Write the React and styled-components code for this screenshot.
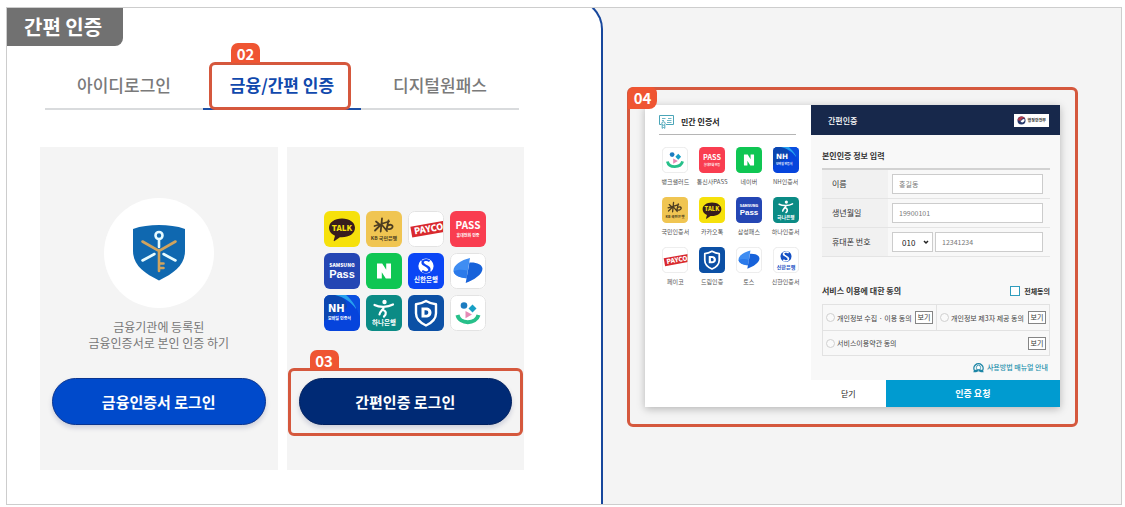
import React from "react";
import styled, { createGlobalStyle, css } from "styled-components";

const FONT = '"Noto Sans CJK KR", "Noto Sans", sans-serif';
const RED = "#d5583d";

const GlobalStyle = createGlobalStyle`
  *, *::before, *::after { box-sizing: border-box; }
  body { margin: 0; background: #fff; font-family: ${FONT}; color: #333; }
  button, input, select { font-family: inherit; margin: 0; }
  h1, h2, h3, p, ul { margin: 0; padding: 0; }
`;

const Page = styled.div`
  padding: 7px 3px 2px 6px;
`;

const Frame = styled.main`
  display: grid;
  grid-template-columns: 596fr 518fr;
  border: 1px solid #cdcdcd;
  background: #f4f4f4;
  overflow: hidden;
`;

/* ---------- login side ---------- */

const LoginPanel = styled.section`
  margin-top: -9px;
  padding: 7px 77px 34px 0;
  background: #fff;
  border: 2px solid #17479c;
  border-width: 2px 2px 0 0;
  border-top-right-radius: 30px;
`;

const PageTitle = styled.h1`
  width: fit-content;
  padding: 0 21px 0 17px;
  background: #717171;
  border-bottom-right-radius: 8px;
  color: #fff;
  font-size: 20px;
  font-weight: 700;
  line-height: 38px;
`;

const Tabs = styled.div`
  display: grid;
  grid-template-columns: repeat(3, 1fr);
  margin: 16px 5px 0 38px;
`;

const Tab = styled.button`
  position: relative;
  height: 48px;
  padding: 0;
  background: none;
  border: 0;
  border-bottom: 2px solid ${(p) => (p.$active ? "#1c4fa5" : "#d9dbdd")};
  color: ${(p) => (p.$active ? "#1149ad" : "#7a7a7a")};
  font-size: 17px;
  font-weight: ${(p) => (p.$active ? 700 : 500)};
  line-height: 24px;
`;

const outline = css`
  border: 3px solid ${RED};
  border-radius: 6px;
`;

const TabOutline = styled.span`
  position: absolute;
  inset: 0 10px -2px 6px;
  ${outline}
`;

const Badge = styled.span`
  position: absolute;
  top: ${(p) => p.$top}px;
  left: ${(p) => p.$left}px;
  width: 29px;
  height: ${(p) => (p.$corner ? 22 : 20)}px;
  background: #ef5532;
  border-radius: ${(p) => (p.$corner ? "6px 6px 8px 0" : "7px 7px 0 0")};
  color: #fff;
  font-size: 15px;
  font-weight: 700;
  line-height: 21px;
  text-align: center;
`;

const Cards = styled.div`
  display: grid;
  grid-template-columns: 1fr 1fr;
  gap: 9px;
  margin: 37px 0 0 33px;
`;

const Card = styled.article`
  display: flex;
  flex-direction: column;
  align-items: center;
  min-height: 323px;
  padding: ${(p) => p.$top}px 12px 45px;
  background: #f4f4f4;
`;

const ShieldDisc = styled.div`
  display: grid;
  place-items: center;
  width: 110px;
  height: 110px;
  margin-bottom: 11px;
  background: #fff;
  border-radius: 50%;
`;

const CardText = styled.p`
  color: #777;
  font-size: 12px;
  line-height: 16px;
  text-align: center;
`;

const ActionSlot = styled.div`
  position: relative;
  width: 100%;
  margin-top: auto;
`;

const ActionOutline = styled.span`
  position: absolute;
  inset: -10px -11px -11px;
  pointer-events: none;
  ${outline}
`;

const LoginButton = styled.button`
  display: block;
  width: 100%;
  height: 47px;
  background: ${(p) => (p.$dark ? "#002a75" : "#004acb")};
  border: 1px solid ${(p) => (p.$dark ? "#00205f" : "#0a3590")};
  border-radius: 24px;
  box-shadow: 0 3px 5px rgba(0, 20, 90, 0.16);
  color: #fff;
  font-size: 15px;
  font-weight: 700;
`;

const LogoGrid = styled.div`
  display: grid;
  grid-template-columns: repeat(4, 36px);
  gap: 6px;
`;

/* ---------- certificate dialog ---------- */

const PreviewPanel = styled.section`
  padding: 79px 43px 0 24px;
`;

const PreviewOutline = styled.div`
  position: relative;
  padding: 15px 15px 17px;
  ${outline}
`;

const Dialog = styled.div`
  display: grid;
  grid-template-columns: 2fr 3fr;
  background: #fff;
  box-shadow: 0 2px 8px rgba(0, 0, 0, 0.26);
`;

const Providers = styled.section`
  padding: 10px 7px 0 12px;
`;

const ProvidersTitle = styled.h2`
  display: flex;
  align-items: center;
  gap: 7px;
  margin: 0 8px 12px 2px;
  padding-bottom: 5px;
  border-bottom: 1px solid #b5b5b5;
  color: #222;
  font-size: 8px;
  font-weight: 700;
  line-height: 14px;
`;

const ProviderGrid = styled.div`
  display: grid;
  grid-template-columns: repeat(4, 1fr);
  row-gap: 10px;
`;

const Provider = styled.button`
  display: flex;
  flex-direction: column;
  align-items: center;
  gap: 3px;
  padding: 0;
  background: none;
  border: 0;
  color: #555;
  font-size: 6px;
  line-height: 11px;
  white-space: nowrap;
`;

const AuthForm = styled.form`
  display: flex;
  flex-direction: column;
  min-width: 0;
  background: #f8f8f8;
`;

const AuthHeader = styled.header`
  display: flex;
  align-items: center;
  justify-content: space-between;
  height: 30px;
  padding: 0 11px 0 17px;
  background: #17284b;
  color: #fff;
`;

const AuthTitle = styled.h2`
  font-size: 8px;
  font-weight: 500;
`;

const Ministry = styled.span`
  display: flex;
  align-items: center;
  gap: 2px;
  height: 13px;
  padding: 0 3px;
  background: #fff;
  color: #333;
  font-size: 4px;
  font-weight: 700;
`;

const AuthBody = styled.div`
  padding: 15px 10px 7px 11px;
`;

const SectionTitle = styled.h3`
  color: #333;
  font-size: 8px;
  font-weight: 700;
  line-height: 12px;
`;

const Fields = styled.div`
  margin-top: 6px;
  border-top: 2px solid #d2d2d2;
`;

const Field = styled.div`
  display: grid;
  grid-template-columns: 66px 1fr;
  height: 29px;
  border-bottom: 1px solid #e4e4e4;
`;

const FieldLabel = styled.label`
  padding-left: 10px;
  background: #f1f1f1;
  color: #333;
  font-size: 8px;
  line-height: 28px;
`;

const FieldControls = styled.div`
  display: flex;
  align-items: center;
  gap: 2px;
  padding: 0 7px 0 4px;
`;

const controlBox = css`
  height: 20px;
  background: #fff;
  border: 1px solid #ccc;
  border-radius: 0;
`;

const TextInput = styled.input`
  flex: 1;
  min-width: 0;
  padding: 0 6px;
  color: #777;
  font-size: 7px;
  ${controlBox}
`;

const SelectBox = styled.span`
  position: relative;
  width: 41px;
  height: 20px;
`;

const Select = styled.select`
  display: block;
  width: 100%;
  padding: 0 0 0 9px;
  appearance: none;
  color: #222;
  font-size: 8px;
  ${controlBox}
`;

const Chevron = styled.svg`
  position: absolute;
  right: 4px;
  top: 8px;
  pointer-events: none;
`;

const ConsentHead = styled.div`
  display: flex;
  justify-content: space-between;
  margin-top: 28px;
`;

const AgreeAll = styled.label`
  display: flex;
  align-items: center;
  gap: 4px;
  color: #333;
  font-size: 7px;
  font-weight: 700;
  line-height: 12px;
`;

const CheckBox = styled.input`
  width: 10px;
  height: 10px;
  appearance: none;
  background: #fff;
  border: 1px solid #2f9cbd;
`;

const ConsentGrid = styled.div`
  display: grid;
  grid-template-columns: 1fr 1fr;
  margin-top: 7px;
  border: 1px solid #e2e2e2;
`;

const Consent = styled.div`
  display: flex;
  align-items: center;
  justify-content: space-between;
  height: 25px;
  padding: 0 3px;
  ${(p) => p.$divided && "border-left: 1px solid #e2e2e2;"}
  ${(p) => p.$wide && "grid-column: 1 / -1; border-top: 1px solid #e2e2e2;"}
`;

const ConsentLabel = styled.label`
  display: flex;
  align-items: center;
  gap: 2px;
  color: #444;
  font-size: 7px;
  line-height: 12px;
  white-space: nowrap;
`;

const Radio = styled.input`
  flex: none;
  width: 9px;
  height: 9px;
  appearance: none;
  background: #fafafa;
  border: 1px solid #d0d0d0;
  border-radius: 50%;
`;

const ViewButton = styled.button`
  width: 18px;
  height: 13px;
  padding: 0;
  background: #fff;
  border: 1px solid #858585;
  color: #333;
  font-size: 7px;
  line-height: 11px;
  white-space: nowrap;
`;

const ManualLink = styled.a`
  display: flex;
  align-items: center;
  gap: 3px;
  width: fit-content;
  margin: 5px 2px 0 auto;
  color: #2390ad;
  font-size: 7px;
  font-weight: 500;
  line-height: 12px;
  text-decoration: none;
`;

const AuthFooter = styled.footer`
  display: grid;
  grid-template-columns: 3fr 7fr;
  height: 27px;
`;

const FooterButton = styled.button`
  padding: 0;
  background: ${(p) => (p.$primary ? "#009bd0" : "#fff")};
  border: 0;
  color: ${(p) => (p.$primary ? "#fff" : "#222")};
  font-size: ${(p) => (p.$primary ? 9 : 8)}px;
  font-weight: ${(p) => (p.$primary ? 700 : 400)};
`;

/* ---------- drawings ---------- */

const LogoText = ({ y, size, fill = "#fff", weight = 700, x = 18, family = FONT, anchor = "middle", children }) => (
  <text x={x} y={y} fontSize={size} fill={fill} fontWeight={weight} textAnchor={anchor} fontFamily={family}>
    {children}
  </text>
);

const ShinhanMark = ({ disc, stroke }) => (
  <g>
    <circle cx="18" cy="13" r="7.6" fill={disc} />
    <path d="M21.6 8.2c-2.6-2.3-7.4-1.2-7.2 1.7.2 3 7.3 2.8 7.2 6.4-.1 3.2-4.8 3.8-7.4 1.5" fill="none" stroke={stroke} strokeWidth="2" />
    <path d="M13.4 7.2l9.2 11.6" stroke={stroke} strokeWidth="1" />
  </g>
);

const LOGOS = {
  talk: {
    bg: "#f6e10b",
    art: (
      <>
        <path d="M18 7.5c-7.6 0-13 4-13 9.300 0 3.600 2.400 6.500 6 8l-1.300 4.800c-.1.500.4.800.8.500l5.400-3.900c8.300.7 15.100-3.200 15.100-9.400 0-5.300-5.400-9.300-13-9.300z" fill="#371d1e" />
        <LogoText y="19.800" size="8" fill="#f6e10b" weight={900}>TALK</LogoText>
      </>
    ),
  },
  kb: {
    bg: "#f0c552",
    art: (
      <>
        <path d="M10 10.500l3 2.500M16 7.500l-1.300 13M8.500 15l14.500-4.500M14 14.500L9 19.500M16 14l5 6M22.500 9.500l-1.800 8.500M21 15.500c2.500-3 6.500-1.700 5.400.8-.9 2-4 2.300-6 1.200" fill="none" stroke="#4d3d21" strokeWidth="1.800" strokeLinecap="round" />
        <LogoText y="28.800" size="5" fill="#4d3d21">KB 국민은행</LogoText>
      </>
    ),
  },
  payco: {
    bg: "#fff",
    edge: true,
    art: (
      <g transform="rotate(-10 18 18)">
        <rect x="3" y="13" width="40" height="11" fill="#d9292e" />
        <LogoText x="6" y="21.500" size="9" weight={900} anchor="start">PAYCO</LogoText>
      </g>
    ),
  },
  pass: {
    bg: "#f93d50",
    art: (
      <>
        <LogoText y="18" size="10">PASS</LogoText>
        <LogoText y="26" size="4">휴대전화 인증</LogoText>
      </>
    ),
  },
  samsung: {
    bg: "#2446b4",
    art: (
      <>
        <LogoText y="13.500" size="5" weight={900}>SAMSUNG</LogoText>
        <LogoText y="25" size="11" family='"Liberation Sans", sans-serif'>Pass</LogoText>
      </>
    ),
  },
  naver: {
    bg: "#0fc653",
    art: <path d="M11 10.500h5.200l4 6.300v-6.300H25v15h-5.200l-4-6.300v6.300H11z" fill="#fff" />,
  },
  shinhan: {
    bg: "#0b46f5",
    art: (
      <>
        <ShinhanMark disc="#fff" stroke="#0b46f5" />
        <LogoText y="29" size="6.500">신한은행</LogoText>
      </>
    ),
  },
  shinhanLight: {
    bg: "#fff",
    edge: true,
    art: (
      <>
        <ShinhanMark disc="#1550c4" stroke="#fff" />
        <LogoText y="30" size="7" fill="#1550c4">신한은행</LogoText>
      </>
    ),
  },
  toss: {
    bg: "#fff",
    edge: true,
    art: (
      <>
        <path d="M20 5C11 7 3.500 12 3.500 17.500c0 4.500 6 7.300 13 7.800z" fill="#3f8df2" />
        <path d="M3.600 18.500c3-2 8-2.500 13.800-1l-.9 7.800c-6.500-.5-12.200-2.800-12.900-6.800z" fill="#2b7aea" />
        <path d="M19.400 9.500c7-.5 13.100 2 13.100 6.300 0 5.700-8.500 11.200-16.800 14.200 1-6 2.300-12 3.700-20.500z" fill="#1762da" />
      </>
    ),
  },
  nh: {
    bg: "#0644dc",
    art: (
      <>
        <path d="M0 0h14c6 3 9 7 9 12C20 17 8 20 0 26z" fill="#0b46b0" />
        <path d="M11 0h15c4 4 6 9 6 14C27 7 20 2 11 0z" fill="#26a1ee" />
        <path d="M22 0h14v22c-3-9-7-16-14-22z" fill="#0a4fe0" />
        <LogoText x="4" y="16.500" size="10" anchor="start" family='"DejaVu Sans", sans-serif'>NH</LogoText>
        <LogoText x="4" y="25" size="4" anchor="start">모바일 인증서</LogoText>
      </>
    ),
  },
  hana: {
    bg: "#0b8b85",
    art: (
      <>
        <circle cx="18.500" cy="7" r="2.200" fill="#fff" />
        <path d="M8.500 10c5 2.500 13 2.500 18.500-.5M18 12c-1 3.500-4.500 4.500-4.500 7.500" fill="none" stroke="#fff" strokeWidth="2.200" strokeLinecap="round" />
        <path d="M16.500 15c4 .5 4.200 4.500 1.500 6.500" fill="none" stroke="#fff" strokeWidth="2.200" strokeLinecap="round" />
        <LogoText y="30" size="6.500">하나은행</LogoText>
      </>
    ),
  },
  dream: {
    bg: "#0c50a5",
    art: (
      <>
        <path d="M18 6c3.500 2 6.500 3 10 3.300v9C28 24 23.500 28 18 30.500 12.500 28 8 24 8 18.300v-9C11.500 9 14.500 8 18 6z" fill="none" stroke="#fff" strokeWidth="2.400" strokeLinejoin="round" />
        <path fillRule="evenodd" d="M13.500 12.500h4.300c3.500 0 5.700 2 5.700 5s-2.200 5-5.700 5h-4.300zM16.500 15.200v4.600h1.200c1.600 0 2.600-.8 2.600-2.300s-1-2.300-2.600-2.300z" fill="#fff" />
      </>
    ),
  },
  salad: {
    bg: "#fff",
    edge: true,
    art: (
      <>
        <circle cx="14" cy="10.500" r="3.300" fill="#1c7cc0" />
        <path d="M22.500 9.500l4 4-4 4-4-4z" fill="#179fc5" />
        <path d="M15.500 16l6.500 3.500-6.500 3.700z" fill="#e58ab5" />
        <path d="M7.500 20c2 9.500 18.500 9.500 21 0" fill="none" stroke="#27c08a" strokeWidth="4" />
      </>
    ),
  },
};

function Logo({ name, size }) {
  const clip = React.useId();
  const { bg, art, edge } = LOGOS[name];
  return (
    <svg width={size} height={size} viewBox="0 0 36 36" aria-hidden="true">
      <clipPath id={clip}>
        <rect width="36" height="36" rx="6" />
      </clipPath>
      <g clipPath={`url(#${clip})`}>
        <rect width="36" height="36" fill={bg} />
        {art}
      </g>
      {edge && <rect x="0.500" y="0.500" width="35" height="35" rx="6" fill="none" stroke="#e3e3e3" />}
    </svg>
  );
}

const ShieldKey = () => (
  <svg width="52" height="56" viewBox="0 0 52 56" aria-hidden="true">
    <path d="M0 4C8 1 17 0 26 0s18 1 26 4v22c0 14-11 22-26 29.500C11 48 0 40 0 26z" fill="#0f68b0" />
    <g fill="none" stroke="#e6fbff" strokeWidth="2.600" strokeLinecap="round">
      <circle cx="26" cy="10.500" r="3.500" />
      <path d="M26 14.500V22M21.500 29L9.500 35.500M30.500 29l12 6.500" />
    </g>
    <g fill="none" stroke="#cfa35e" strokeWidth="2.600" strokeLinecap="round">
      <path d="M9.500 16.500L26 26l16.500-9.500M26 26v20M27 38.500h3.500M27 43h3.500" />
    </g>
  </svg>
);

const CertificateIcon = () => (
  <svg width="15" height="14" viewBox="0 0 15 14" fill="none" stroke="#4aa5b8" aria-hidden="true">
    <path d="M2.500 9.500h-2v-9h14v9H7" />
    <path d="M3 3.500h3.500M3 5.500h2M9 3.500h3.500M8 5.500h4.500M8 7.500h4.500" strokeWidth=".8" />
    <circle cx="4.500" cy="8.500" r="1.700" />
    <path d="M3.200 10v3.300l1.300-.8 1.300.8V10" />
  </svg>
);

const MinistryMark = () => (
  <svg width="9" height="9" viewBox="0 0 9 9" aria-hidden="true">
    <circle cx="4.500" cy="4.500" r="4" fill="#26396b" />
    <path d="M.6 4C1 1.800 2.700.5 4.600.5c1.700 0 3 1 3.600 2.300C6.500 1.900 5.200 2.500 4.400 3.700 3.600 4.900 2.200 5.100.6 4z" fill="#b23a4a" />
    <path d="M3.500 4.700C5 5 5.300 2.900 7.300 3.100c.9 1.500-.3 3.300-2 3.300-.9 0-1.600-.6-1.800-1.700z" fill="#fff" />
  </svg>
);

const ManualIcon = () => (
  <svg width="11" height="11" viewBox="0 0 11 11" aria-hidden="true">
    <path d="M2 9.300A4.600 4.600 0 1 1 9 9.300" fill="none" stroke="#1d86a6" strokeWidth="1.400" />
    <path d="M3.400 5.500a2.100 2.300 0 1 1 4.200 0c0 1-.5 1.600-.9 2H4.300c-.4-.4-.9-1-.9-2z" fill="#fff" stroke="#1d86a6" strokeWidth=".8" />
    <path d="M.3 10.300c.3-1.800 1.700-2.600 3.700-3l1.500 1.200L7 7.300c2 .4 3.400 1.200 3.700 3H8L5.500 9.300 3 10.300z" fill="#1d86a6" />
  </svg>
);

/* ---------- content ---------- */

const LOGIN_LOGOS = [
  "talk", "kb", "payco", "pass",
  "samsung", "naver", "shinhan", "toss",
  "nh", "hana", "dream", "salad",
];

const PROVIDERS = [
  ["salad", "뱅크샐러드"],
  ["pass", "통신사PASS"],
  ["naver", "네이버"],
  ["nh", "NH인증서"],
  ["kb", "국민인증서"],
  ["talk", "카카오톡"],
  ["samsung", "삼성패스"],
  ["hana", "하나인증서"],
  ["payco", "페이코"],
  ["dream", "드림인증"],
  ["toss", "토스"],
  ["shinhanLight", "신한인증서"],
];

const CONSENTS = [
  { id: "privacy", text: "개인정보 수집 · 이용 동의" },
  { id: "third", text: "개인정보 제3자 제공 동의", divided: true },
  { id: "terms", text: "서비스이용약관 동의", wide: true },
];

export default function App() {
  return (
    <Page>
      <GlobalStyle />
      <Frame>
        <LoginPanel>
          <PageTitle>간편 인증</PageTitle>
          <Tabs role="tablist">
            <Tab type="button" role="tab">아이디로그인</Tab>
            <Tab type="button" role="tab" aria-selected="true" $active>
              금융/간편 인증
              <TabOutline />
              <Badge $top={-19} $left={28}>02</Badge>
            </Tab>
            <Tab type="button" role="tab">디지털원패스</Tab>
          </Tabs>
          <Cards>
            <Card $top={51}>
              <ShieldDisc><ShieldKey /></ShieldDisc>
              <CardText>
                금융기관에 등록된<br />
                금융인증서로 본인 인증 하기
              </CardText>
              <ActionSlot>
                <LoginButton type="button">금융인증서 로그인</LoginButton>
              </ActionSlot>
            </Card>
            <Card $top={64}>
              <LogoGrid>
                {LOGIN_LOGOS.map((name) => <Logo key={name} name={name} size={36} />)}
              </LogoGrid>
              <ActionSlot>
                <LoginButton type="button" $dark>간편인증 로그인</LoginButton>
                <ActionOutline />
                <Badge $top={-28} $left={11}>03</Badge>
              </ActionSlot>
            </Card>
          </Cards>
        </LoginPanel>

        <PreviewPanel>
          <PreviewOutline>
            <Dialog>
              <Providers>
                <ProvidersTitle><CertificateIcon />민간 인증서</ProvidersTitle>
                <ProviderGrid>
                  {PROVIDERS.map(([name, label]) => (
                    <Provider key={name} type="button">
                      <Logo name={name} size={26} />
                      {label}
                    </Provider>
                  ))}
                </ProviderGrid>
              </Providers>
              <AuthForm>
                <AuthHeader>
                  <AuthTitle>간편인증</AuthTitle>
                  <Ministry><MinistryMark />행정안전부</Ministry>
                </AuthHeader>
                <AuthBody>
                  <SectionTitle>본인인증 정보 입력</SectionTitle>
                  <Fields>
                    <Field>
                      <FieldLabel htmlFor="name">이름</FieldLabel>
                      <FieldControls><TextInput id="name" defaultValue="홍길동" /></FieldControls>
                    </Field>
                    <Field>
                      <FieldLabel htmlFor="birth">생년월일</FieldLabel>
                      <FieldControls><TextInput id="birth" defaultValue="19900101" /></FieldControls>
                    </Field>
                    <Field>
                      <FieldLabel htmlFor="phone">휴대폰 번호</FieldLabel>
                      <FieldControls>
                        <SelectBox>
                          <Select aria-label="휴대폰 앞자리" defaultValue="010">
                            <option>010</option>
                          </Select>
                          <Chevron width="6" height="5" viewBox="0 0 6 5">
                            <path d="M1 1l2 2 2-2" fill="none" stroke="#222" strokeWidth="1.500" />
                          </Chevron>
                        </SelectBox>
                        <TextInput id="phone" defaultValue="12341234" />
                      </FieldControls>
                    </Field>
                  </Fields>
                  <ConsentHead>
                    <SectionTitle>서비스 이용에 대한 동의</SectionTitle>
                    <AgreeAll><CheckBox type="checkbox" />전체동의</AgreeAll>
                  </ConsentHead>
                  <ConsentGrid>
                    {CONSENTS.map((c) => (
                      <Consent key={c.id} $divided={c.divided} $wide={c.wide}>
                        <ConsentLabel><Radio type="radio" name={c.id} />{c.text}</ConsentLabel>
                        <ViewButton type="button">보기</ViewButton>
                      </Consent>
                    ))}
                  </ConsentGrid>
                  <ManualLink href="#manual"><ManualIcon />사용방법 매뉴얼 안내</ManualLink>
                </AuthBody>
                <AuthFooter>
                  <FooterButton type="button">닫기</FooterButton>
                  <FooterButton type="button" $primary>인증 요청</FooterButton>
                </AuthFooter>
              </AuthForm>
            </Dialog>
            <Badge $top={-3} $left={-2} $corner>04</Badge>
          </PreviewOutline>
        </PreviewPanel>
      </Frame>
    </Page>
  );
}
